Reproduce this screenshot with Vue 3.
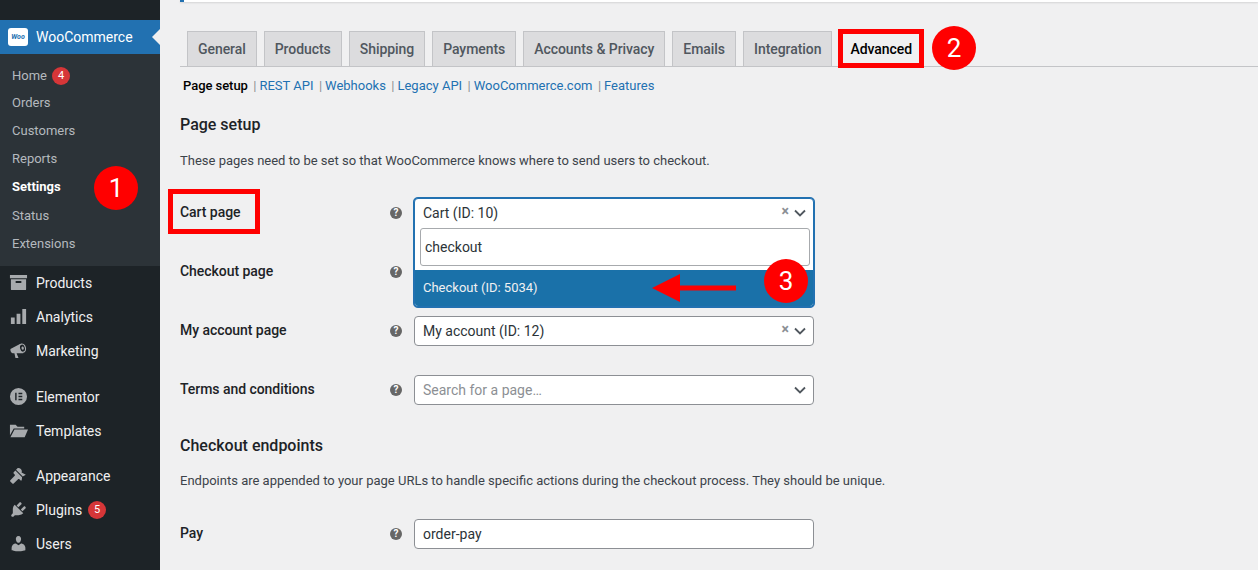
<script setup>
const submenu = [
  { label: 'Home', badge: '4' },
  { label: 'Orders' },
  { label: 'Customers' },
  { label: 'Reports' },
  { label: 'Settings', current: true },
  { label: 'Status' },
  { label: 'Extensions' }
]
const tabs = ['General', 'Products', 'Shipping', 'Payments', 'Accounts & Privacy', 'Emails', 'Integration']
const links = ['REST API', 'Webhooks', 'Legacy API', 'WooCommerce.com', 'Features']
</script>

<template>
  <div class="page">
    <aside class="sidebar">
      <div class="top"></div>
      <div class="woo">
        <span class="woo-logo">Woo</span>
        <span>WooCommerce</span>
        <i class="wedge"></i>
      </div>
      <ul class="sub">
        <li v-for="s in submenu" :key="s.label" :class="{ current: s.current }">
          {{ s.label }}<b v-if="s.badge" class="badge">{{ s.badge }}</b>
        </li>
      </ul>
      <div class="group">
        <div class="item">
          <svg viewBox="0 0 20 20"><path fill-rule="evenodd" d="M1 2h18v3.500H1zM2 6.500h16V17a1 1 0 0 1-1 1H3a1 1 0 0 1-1-1zM7 8.500v2h6v-2z"/></svg>Products
        </div>
        <div class="item">
          <svg viewBox="0 0 20 20"><path d="M2 11h4v7H2zM8 7h4v11H8zM14 2h4v16h-4z"/></svg>Analytics
        </div>
        <div class="item">
          <svg viewBox="0 0 20 20"><path d="M1.500 8.500L12 2.800l3 10H8l2 5.200H6.800L5.700 12.800H3.800C2.300 12.800 1.200 10.500 1.500 8.500z"/><ellipse cx="14.200" cy="7.500" rx="3.700" ry="5" transform="rotate(-15 14.200 7.500)"/><ellipse cx="14.200" cy="7.500" rx="2.500" ry="3.800" transform="rotate(-15 14.200 7.500)" fill="#1d2327"/><ellipse cx="14.400" cy="7.500" rx="1.200" ry="1.800" transform="rotate(-15 14.400 7.500)"/></svg>Marketing
        </div>
      </div>
      <div class="group">
        <div class="item">
          <svg viewBox="0 0 20 20"><path fill-rule="evenodd" d="M10 1a9 9 0 1 0 0 18 9 9 0 0 0 0-18zM6.500 6H8v8H6.500zM10 6h4v1.600h-4zM10 9.200h4v1.600h-4zM10 12.400h4V14h-4z"/></svg>Elementor
        </div>
        <div class="item">
          <svg viewBox="0 0 20 20"><path d="M1 4h6l2 2h7v2H5L1 15zM5.800 9H20l-3.500 8H1.500z"/></svg>Templates
        </div>
      </div>
      <div class="group g3">
        <div class="item">
          <svg viewBox="0 0 20 20"><path d="M14.480 11.060L7.410 3.990l1.500-1.500c.5-.56 2.300-.47 3.540.76 1.240 1.240 1.310 3.030.76 3.540l4.500 2.500zM13.770 11.760L6.700 4.690 4.930 6.460c-.39.39-.39 1.020 0 1.410l1.060 1.060c.39.39.39 1.020 0 1.410l-4.600 4.600c-.39.39-.39 1.020 0 1.410l2.120 2.120c.39.39 1.020.39 1.410 0l4.600-4.600c.39-.39 1.020-.39 1.410 0l1.060 1.060c.39.39 1.020.39 1.410 0z"/></svg>Appearance
        </div>
        <div class="item">
          <svg viewBox="0 0 20 20"><path d="M13.110 4.360L9.870 7.600 8 5.730l3.240-3.240c.35-.34 1.050-.2 1.560.32.520.51.660 1.210.31 1.550zm-8 1.770l.91-1.120 9.010 9.010-1.190.84c-.71.710-2.630 1.160-3.820 1.160H6.140L4.900 17.260c-.59.590-1.540.590-2.120 0-.59-.58-.59-1.530 0-2.120l1.240-1.240v-3.880c0-1.130.4-3.190 1.090-3.890zm7.260 3.970l3.240-3.240c.34-.35 1.040-.21 1.550.31.520.51.660 1.210.31 1.550l-3.240 3.250z"/></svg>Plugins<b class="badge b5">5</b>
        </div>
        <div class="item">
          <svg viewBox="0 0 20 20"><path d="M10 9.250c-2.270 0-2.730-3.440-2.730-3.440C7 4.020 7.820 2 9.970 2c2.160 0 2.980 2.020 2.710 3.810 0 0-.41 3.440-2.680 3.440zm0 2.570L12.720 10c2.390 0 4.520 2.330 4.520 4.530v2.490s-3.650 1.130-7.240 1.130c-3.650 0-7.240-1.130-7.240-1.130v-2.490c0-2.250 1.940-4.480 4.470-4.480z"/></svg>Users
        </div>
      </div>
    </aside>

    <main class="main">
      <div class="bar"></div>
      <nav class="tabs">
        <a v-for="t in tabs" :key="t" class="tab">{{ t }}</a>
        <a class="tab active">Advanced</a>
      </nav>
      <div class="subnav">
        <strong>Page setup</strong>
        <span v-for="l in links" :key="l" class="sublink"><em>|</em><a>{{ l }}</a></span>
      </div>

      <h2 class="h1">Page setup</h2>
      <p class="desc d1">These pages need to be set so that WooCommerce knows where to send users to checkout.</p>

      <div class="rows r1">
        <div class="row">
          <label>Cart page</label><span class="help">?</span>
          <div class="field select open">
            <span>Cart (ID: 10)</span><span class="x">×</span>
            <svg class="chev" viewBox="0 0 12 8"><path d="M1 1.500l5 5 5-5"/></svg>
            <div class="drop">
              <div class="search">checkout</div>
              <div class="option">Checkout (ID: 5034)</div>
            </div>
          </div>
        </div>
        <div class="row">
          <label>Checkout page</label><span class="help">?</span>
          <div class="field select"></div>
        </div>
        <div class="row">
          <label>My account page</label><span class="help">?</span>
          <div class="field select">
            <span>My account (ID: 12)</span><span class="x">×</span>
            <svg class="chev" viewBox="0 0 12 8"><path d="M1 1.500l5 5 5-5"/></svg>
          </div>
        </div>
        <div class="row">
          <label>Terms and conditions</label><span class="help">?</span>
          <div class="field select">
            <span class="ph">Search for a page…</span>
            <svg class="chev" viewBox="0 0 12 8"><path d="M1 1.500l5 5 5-5"/></svg>
          </div>
        </div>
      </div>

      <h2 class="h2">Checkout endpoints</h2>
      <p class="desc d2">Endpoints are appended to your page URLs to handle specific actions during the checkout process. They should be unique.</p>
      <div class="rows r2">
        <div class="row">
          <label>Pay</label><span class="help">?</span>
          <div class="field"><span>order-pay</span></div>
        </div>
      </div>
    </main>

    <div class="mark m-adv"></div>
    <div class="mark m-cart"></div>
    <div class="num n1">1</div>
    <div class="num n2">2</div>
    <div class="num n3">3</div>
    <svg class="arrow" viewBox="0 0 84 28"><path d="M0 14L28 0v11.500h56v5H28V28z" fill="#f00"/></svg>
  </div>
</template>

<style>
html, body { margin: 0; height: 570px; overflow: hidden; background: #f0f0f1; }
</style>

<style scoped>
.page {
  position: relative;
  display: flex;
  width: 1258px;
  height: 570px;
  overflow: hidden;
  font-family: Roboto, "Noto Sans", sans-serif;
  font-size: 13px;
  color: #3c434a;
  background: #f0f0f1;
}
.sidebar { width: 160px; flex: none; background: #1d2327; color: #f0f0f1; font-size: 14px; }
.top { height: 20px; }
.woo {
  position: relative;
  display: flex;
  align-items: center;
  height: 34px;
  background: #2271b1;
  color: #fff;
}
.woo-logo {
  width: 20px;
  height: 18px;
  margin: 0 8px;
  border-radius: 3px;
  background: #fff;
  color: #2271b1;
  font: italic 700 7px/18px Roboto, sans-serif;
  text-align: center;
}
.wedge {
  position: absolute;
  right: 0;
  top: 9px;
  border: 8px solid transparent;
  border-right-color: #f0f0f1;
  border-left-width: 0;
}
.sub {
  list-style: none;
  margin: 0;
  padding: 6.500px 0 8.800px;
  background: #2c3338;
  color: #b4b9be;
  font-size: 13px;
}
.sub li { display: flex; align-items: center; box-sizing: border-box; height: 28.100px; padding-left: 12px; }
.sub li:first-child { padding-top: 2px; }
.sub li.current { color: #fff; font-weight: 700; }
.badge {
  display: inline-block;
  width: 18px;
  height: 18px;
  margin-left: 5px;
  border-radius: 50%;
  background: #d63638;
  color: #fff;
  font-size: 11px;
  font-weight: 400;
  line-height: 18px;
  text-align: center;
}
.b5 { margin-left: 6px; }
.group { margin-bottom: 12px; }
.g3 { margin-top: -1px; }
.item { display: flex; align-items: center; height: 34px; }
.item svg { width: 19px; height: 19px; margin: 0 8px 0 9px; fill: #a7aaad; flex: none; }

.main { flex: 1; min-width: 0; padding-left: 20px; }
.bar {
  height: 2px;
  background: #fff;
  border-left: 4px solid #2271b1;
  box-shadow: 0 1px 2px rgba(0, 0, 0, .12);
}
.tabs {
  display: flex;
  gap: 7px;
  height: 35px;
  margin-top: 29px;
  padding-left: 7px;
  border-bottom: 1px solid #c3c4c7;
}
.tab {
  height: 34px;
  padding: 0 10px;
  border: 1px solid #c3c4c7;
  border-bottom: 0;
  background: #dcdcde;
  color: #50575e;
  font-size: 14px;
  font-weight: 500;
  line-height: 34px;
  letter-spacing: -0.060px;
}
.tab.active { background: #f0f0f1; color: #000; height: 35px; }
.subnav { height: 20px; margin-top: 9px; padding-left: 3px; line-height: 20px; white-space: nowrap; }
.subnav strong { color: #000; font-weight: 500; letter-spacing: -0.050px; }
.sublink em { margin: 0 3px 0 5.400px; color: #8c8f94; font-style: normal; }
.sublink a { color: #2271b1; }
.h1, .h2 { margin: 0; height: 20px; color: #1d2327; font-size: 16px; font-weight: 500; line-height: 20px; }
.h1 { margin-top: 19px; }
.h2 { margin-top: 16px; }
.desc { margin: 0; height: 20px; line-height: 20px; }
.d1 { margin-top: 16px; }
.d2 { margin-top: 15px; }
.r1 { margin-top: 13px; }
.r2 { margin-top: 14px; }
.row { display: flex; align-items: center; height: 30px; padding: 14px 0 15px; }
.row label { position: relative; top: -1px; width: 210px; color: #1d2327; font-size: 14px; font-weight: 500; letter-spacing: -0.050px; }
.help {
  position: relative;
  top: -0.500px;
  width: 12px;
  height: 12px;
  margin-right: 12px;
  border-radius: 50%;
  background: #666;
  color: #fff;
  font-size: 10px;
  font-weight: 700;
  line-height: 12px;
  text-align: center;
}
.field {
  position: relative;
  display: flex;
  align-items: center;
  box-sizing: border-box;
  width: 400px;
  height: 30px;
  padding: 0 8px;
  border: 1px solid #8c8f94;
  border-radius: 4px;
  background: #fff;
  color: #2c3338;
  font-size: 14px;
}
.x { position: absolute; right: 24px; top: 4px; color: #8c8f94; font-size: 14px; font-weight: 700; line-height: 16px; }
.chev { position: absolute; right: 7px; top: 10px; width: 12px; height: 8px; fill: none; stroke: #50575e; stroke-width: 1.800; }
.ph { color: #8c8f94; }
.select.open {
  border-color: #2271b1;
  border-bottom-left-radius: 0;
  border-bottom-right-radius: 0;
  box-shadow: 0 -1px 0 #2271b1, -1px 0 0 #2271b1, 1px 0 0 #2271b1;
  z-index: 2;
}
.drop {
  position: absolute;
  left: -1px;
  right: -1px;
  top: 27px;
  box-sizing: border-box;
  height: 81px;
  padding-top: 2px;
  background: #fff;
  border: 1px solid #2271b1;
  border-top: 0;
  border-radius: 0 0 4px 4px;
  box-shadow: -1px 0 0 #2271b1, 1px 0 0 #2271b1, 0 1px 0 #2271b1;
}
.search {
  box-sizing: border-box;
  height: 38px;
  margin: 0 3px 0 5px;
  padding: 0 4px;
  border: 1px solid #a7aaad;
  border-radius: 3px;
  color: #2c3338;
  font-size: 14px;
  line-height: 36px;
}
.option {
  height: 36px;
  margin-top: 4px;
  padding-left: 8px;
  background: #1a71a9;
  color: #f0f0f1;
  font-size: 13px;
  line-height: 35px;
  border-radius: 0 0 3px 3px;
}
.mark { position: absolute; box-sizing: border-box; border: 5px solid #f00; z-index: 3; }
.m-adv { left: 838px; top: 29px; width: 86px; height: 39px; }
.m-cart { left: 168px; top: 189px; width: 92px; height: 45px; }
.num {
  position: absolute;
  z-index: 3;
  width: 44px;
  height: 44px;
  border-radius: 50%;
  background: #f00;
  color: #fff;
  font-size: 26px;
  line-height: 44px;
  text-align: center;
}
.n1 { left: 94px; top: 166px; }
.n2 { left: 932px; top: 26px; }
.n3 { left: 764px; top: 259px; }
.arrow { position: absolute; z-index: 3; left: 652px; top: 274px; width: 84px; height: 28px; }
</style>
